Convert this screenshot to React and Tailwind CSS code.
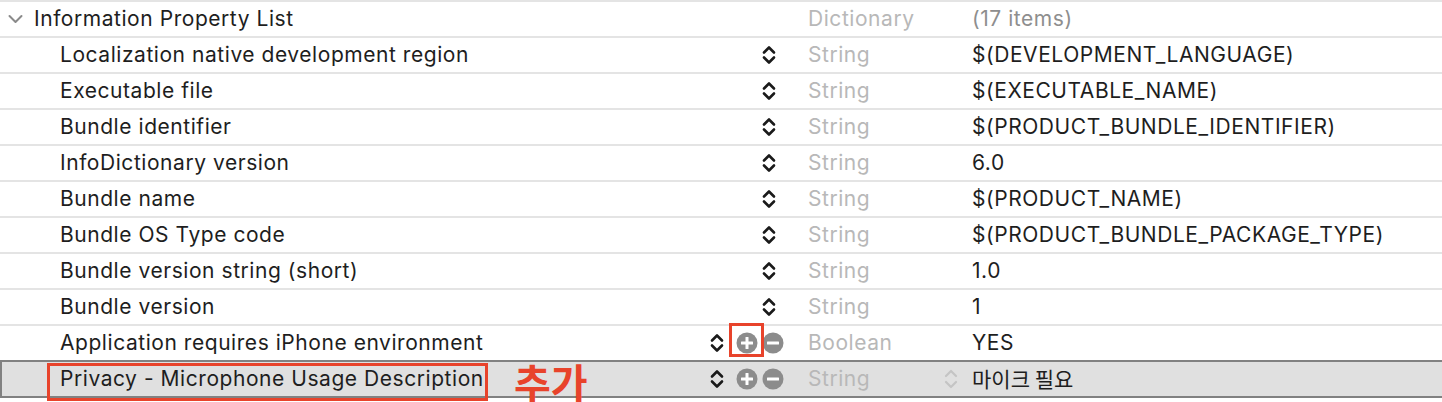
import React from 'react';

const rows = [
  { key: 'Localization native development region', type: 'String', value: '$(DEVELOPMENT_LANGUAGE)' },
  { key: 'Executable file', type: 'String', value: '$(EXECUTABLE_NAME)' },
  { key: 'Bundle identifier', type: 'String', value: '$(PRODUCT_BUNDLE_IDENTIFIER)' },
  { key: 'InfoDictionary version', type: 'String', value: '6.0' },
  { key: 'Bundle name', type: 'String', value: '$(PRODUCT_NAME)' },
  { key: 'Bundle OS Type code', type: 'String', value: '$(PRODUCT_BUNDLE_PACKAGE_TYPE)' },
  { key: 'Bundle version string (short)', type: 'String', value: '1.0' },
  { key: 'Bundle version', type: 'String', value: '1' },
  { key: 'Application requires iPhone environment', type: 'Boolean', value: 'YES', buttons: true, mark: true },
];

function Stepper({ color = '#1a1a1a', size = 'sm' }) {
  if (size === 'lg') {
    return (
      <svg width="16" height="24" viewBox="0 0 16 24" fill="none" stroke={color} strokeWidth="2.2" strokeLinecap="round" strokeLinejoin="round">
        <path d="M3 9 L8 4 L13 9" />
        <path d="M3 15 L8 20 L13 15" />
      </svg>
    );
  }
  return (
    <svg width="14" height="20" viewBox="0 0 14 20" fill="none" stroke={color} strokeWidth="2.6" strokeLinecap="round" strokeLinejoin="round">
      <path d="M2 7.5 L7 2.5 L12 7.5" />
      <path d="M2 12.5 L7 17.5 L12 12.5" />
    </svg>
  );
}

function CircleBtn({ plus }) {
  return (
    <svg width="22" height="22" viewBox="0 0 22 22">
      <circle cx="11" cy="11" r="10.5" fill="#8c8c8c" />
      <rect x="5" y="9.5" width="12" height="3" rx="0.5" fill="#fff" />
      {plus && <rect x="9.5" y="5" width="3" height="12" rx="0.5" fill="#fff" />}
    </svg>
  );
}

function Controls({ buttons, mark }) {
  if (!buttons) {
    return (
      <div className="w-[108px] flex items-center justify-end pr-[32px]">
        <Stepper />
      </div>
    );
  }
  return (
    <div className="w-[108px] flex items-center justify-end pr-[24px]">
      <Stepper />
      <div className="relative ml-[12px]">
        <CircleBtn plus />
        {mark && <div className="absolute left-[-7px] top-[-9px] w-[35px] h-[34px] border-[3px] border-[#e8432b]" />}
      </div>
      <div className="ml-[4px]">
        <CircleBtn />
      </div>
    </div>
  );
}

export default function App() {
  return (
    <div className="w-[1442px] h-[402px] bg-white overflow-hidden text-[21px] tracking-[0.55px] text-[#1e1e1e]" style={{ fontFamily: 'Inter, "Noto Sans CJK KR", sans-serif' }}>
      <div className="h-[36px] border-t-2 border-[#e4e4e4] flex items-center">
        <div className="w-[700px] flex items-center">
          <svg className="ml-[8px]" width="15" height="10" viewBox="0 0 15 10" fill="none" stroke="#8a8a8a" strokeWidth="2" strokeLinecap="round" strokeLinejoin="round">
            <path d="M1.5 2 L7.5 8 L13.5 2" />
          </svg>
          <span className="ml-[11px]">Information Property List</span>
        </div>
        <div className="w-[108px]" />
        <div className="w-[164px] text-[#b8b8b8]">Dictionary</div>
        <div className="text-[#8e8e8e]">(17 items)</div>
      </div>

      {rows.map((r) => (
        <div key={r.key} className="h-[36px] border-t-2 border-[#e4e4e4] flex items-center">
          <div className="w-[700px] pl-[60px] whitespace-nowrap">{r.key}</div>
          <Controls buttons={r.buttons} mark={r.mark} />
          <div className="w-[164px] text-[#b8b8b8]">{r.type}</div>
          <div className="whitespace-nowrap">{r.value}</div>
        </div>
      ))}

      <div className="relative h-[38px] border-y-2 border-l-2 border-[#818181] bg-[#e0e0e0] flex items-center">
        <div className="w-[698px] pl-[58px] whitespace-nowrap">Privacy - Microphone Usage Description</div>
        <Controls buttons />
        <div className="w-[135px] text-[#b8b8b8]">String</div>
        <div className="w-[29px] flex items-center">
          <Stepper color="#c4c4c4" size="lg" />
        </div>
        <div className="whitespace-nowrap tracking-normal" style={{ fontFamily: '"Noto Sans CJK KR", sans-serif' }}>마이크 필요</div>

        <div className="absolute left-[45px] top-[1px] w-[441px] h-[38px] border-[3px] border-[#e8432b]" />
        <div className="absolute left-[512px] top-[-1px] text-[40px] font-bold leading-[40px] tracking-normal text-[#e8432b]" style={{ fontFamily: '"Noto Sans CJK KR", sans-serif' }}>추가</div>
      </div>
    </div>
  );
}
